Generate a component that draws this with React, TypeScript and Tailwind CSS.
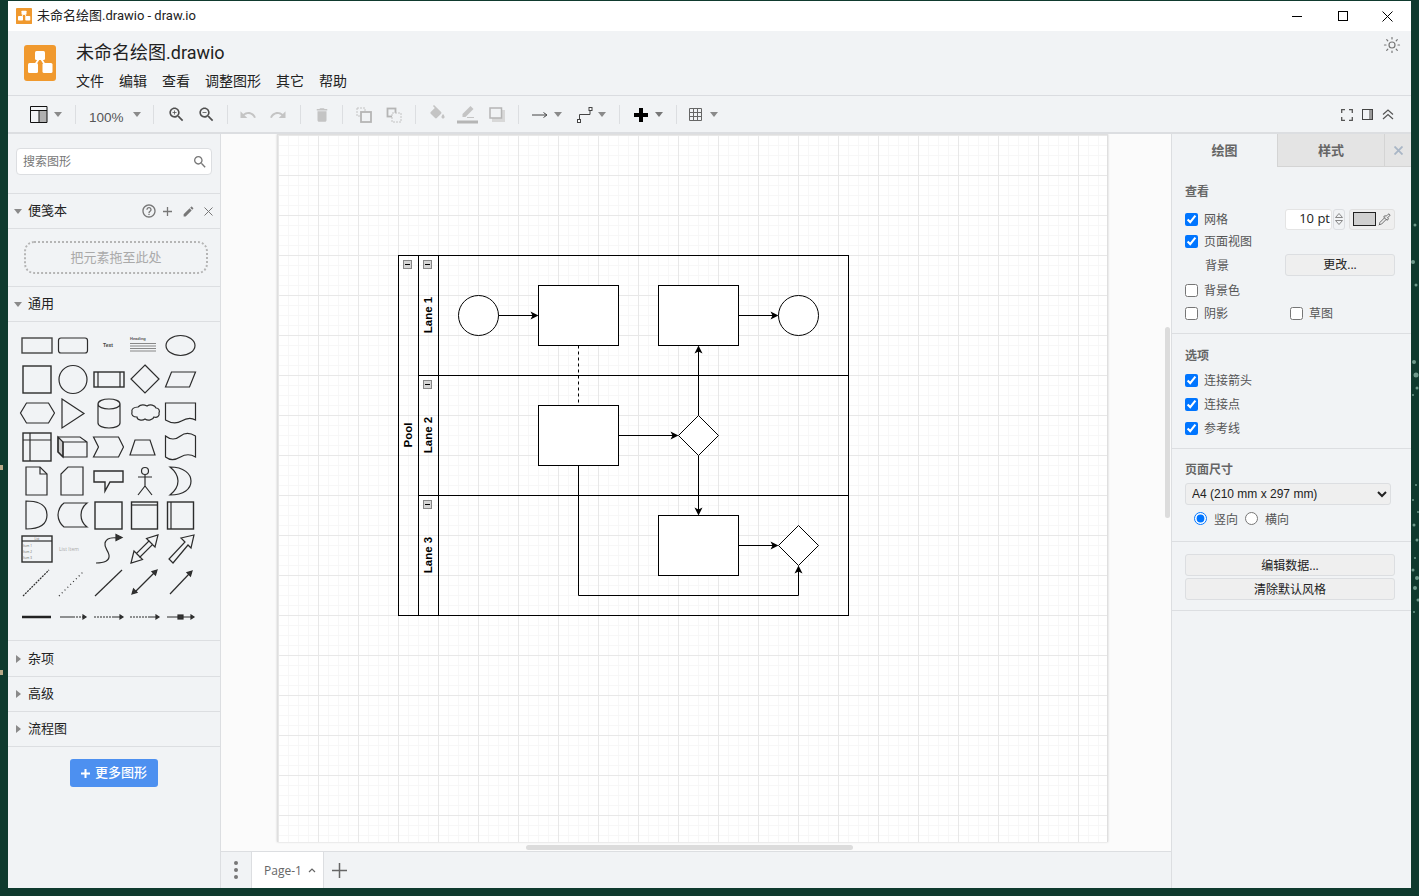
import { Sun, Pipette } from "lucide-react";
import type { ReactNode } from "react";

const FONT = "font-['Open_Sans','Noto_Sans_CJK_SC',sans-serif]";
const ROBOTO = "font-['Roboto','Noto_Sans_CJK_SC',sans-serif]";
const ARIAL = "font-['Liberation_Sans','Noto_Sans_CJK_SC',sans-serif]";

const ZOOM = "M15.5 14h-.79l-.28-.27C15.41 12.59 16 11.11 16 9.5 16 5.91 13.09 3 9.5 3S3 5.91 3 9.5 5.91 16 9.5 16c1.61 0 3.09-.59 4.23-1.57l.27.28v.79l5 4.99L20.49 19l-4.99-5zm-6 0C7.01 14 5 11.99 5 9.5S7.01 5 9.5 5 14 7.01 14 9.5 11.99 14 9.5 14z";
const UNDO = "M12.5 8c-2.65 0-5.05.99-6.9 2.6L2 7v9h9l-3.62-3.62c1.39-1.16 3.16-1.88 5.12-1.88 3.54 0 6.55 2.31 7.6 5.5l2.37-.78C21.08 11.03 17.15 8 12.5 8z";
const REDO = "M18.4 10.6C16.55 8.99 14.15 8 11.5 8c-4.65 0-8.58 3.03-9.96 7.22L3.9 16c1.05-3.19 4.05-5.5 7.6-5.5 1.95 0 3.73.72 5.12 1.88L13 16h9V7l-3.6 3.6z";
const TRASH = "M6 19c0 1.1.9 2 2 2h8c1.1 0 2-.9 2-2V7H6v12zM19 4h-3.5l-1-1h-5l-1 1H5v2h14V4z";
const FILL = "M16.56 8.94L7.62 0 6.21 1.41l2.38 2.38-5.15 5.15c-.59.59-.59 1.54 0 2.12l5.5 5.5c.29.29.68.44 1.06.44s.77-.15 1.06-.44l5.5-5.5c.59-.58.59-1.53 0-2.12zM19 11.5s-2 2.17-2 3.5c0 1.1.9 2 2 2s2-.9 2-2c0-1.33-2-3.5-2-3.5z";
const EDIT = "M3 17.25V21h3.75L17.81 9.94l-3.75-3.75L3 17.25zM20.71 7.04c.39-.39.39-1.02 0-1.41l-2.34-2.34c-.39-.39-1.02-.39-1.41 0l-1.83 1.83 3.75 3.75 1.83-1.83z";
const HELP = "M11 18h2v-2h-2v2zm1-16C6.48 2 2 6.48 2 12s4.48 10 10 10 10-4.48 10-10S17.52 2 12 2zm0 18c-4.41 0-8-3.59-8-8s3.59-8 8-8 8 3.59 8 8-3.59 8-8 8zm0-14c-2.21 0-4 1.79-4 4h2c0-1.1.9-2 2-2s2 .9 2 2c0 2-3 1.75-3 5h2c0-2.25 3-2.5 3-5 0-2.21-1.79-4-4-4z";

function Mat({ d, size = 18, color = "#505050", extra }: { d: string; size?: number; color?: string; extra?: string }) {
  return (
    <svg width={size} height={size} viewBox="0 0 24 24" fill={color} className="shrink-0">
      <path d={d} />
      {extra && <path d={extra} />}
    </svg>
  );
}

function Logo({ width, height, radius }: { width: number; height: number; radius: number }) {
  return (
    <svg width={width} height={height} viewBox="0 0 32 36" preserveAspectRatio="none" className="shrink-0">
      <rect width="32" height="36" rx={radius} fill="#f0992e" />
      <path d="M16 12 L8.5 24 M16 12 L23.5 24" stroke="#fff" strokeWidth="1.8" />
      <rect x="11" y="6" width="10" height="9" rx="1.5" fill="#fff" />
      <rect x="4" y="18" width="10" height="10" rx="1.5" fill="#fff" />
      <rect x="18.500" y="18" width="10" height="10" rx="1.5" fill="#fff" />
    </svg>
  );
}

function Caret({ color = "#8a8a8a" }: { color?: string }) {
  return <div className={"w-0 h-0 border-x-[4.5px] border-x-transparent border-t-[5px]"} style={{ borderTopColor: color }} />;
}

function Divider() {
  return <div className="w-px h-[19px] bg-[#dcdee1] shrink-0" />;
}

function TitleBar() {
  return (
    <div className={`h-[30px] bg-white flex items-center shrink-0 ${ROBOTO}`}>
      <div className="ml-2"><Logo width={16} height={16} radius={1} /></div>
      <span className="ml-[5px] text-[13px] text-[#222] whitespace-nowrap">未命名绘图.drawio - draw.io</span>
      <div className="ml-auto flex items-center h-full">
        <div className="w-[45px] flex justify-center mr-px"><div className="w-[10px] h-px bg-black" /></div>
        <div className="w-[45px] flex justify-center"><div className="w-[10px] h-[10px] border border-black" /></div>
        <div className="w-[45px] flex justify-center mr-[1px]">
          <svg width="11" height="11" viewBox="0 0 11 11"><path d="M.5.5l10 10M10.5.5l-10 10" stroke="#000" /></svg>
        </div>
      </div>
    </div>
  );
}

function MenuHeader() {
  const items = ["文件", "编辑", "查看", "调整图形", "其它", "帮助"];
  return (
    <div className={`h-[65px] bg-[#f1f3f5] border-b border-[#dadce0] flex shrink-0 relative ${ROBOTO}`}>
      <div className="ml-4 mt-[14px]"><Logo width={32} height={36} radius={3} /></div>
      <div className="ml-5 flex flex-col">
        <div className="text-[18px] leading-[24px] mt-[10px] text-[#222] whitespace-nowrap">未命名绘图.drawio</div>
        <div className="flex gap-[15px] mt-[7px] text-[14px] leading-[18px] text-[#222]">
          {items.map((m) => <span key={m}>{m}</span>)}
        </div>
      </div>
      <div className="ml-auto mr-[10px] mt-[5px]"><Sun size={18} color="#777" strokeWidth={1.6} /></div>
    </div>
  );
}

function Toolbar() {
  const off = "#c4c4c4";
  return (
    <div className={`h-[38px] pt-px bg-[#f1f3f5] border-b-2 border-[#dcdee1] flex items-center shrink-0 ${ARIAL}`}>
      <div className="w-[67px] pl-[22px] flex items-center gap-[6px]">
        <svg width="18" height="17" viewBox="0 0 18 17">
          <rect x="9" y="4.5" width="8" height="12" fill="#b0b0b0" />
          <path d="M.5.5h16.5v16H.5zM.5 4.5h16.5M9 4.5v12" fill="none" stroke="#111" />
        </svg>
        <Caret />
      </div>
      <Divider />
      <div className="w-[77px] pl-[13px] flex items-center gap-[9px]">
        <span className="text-[13.5px] text-[#555] mt-[8px]">100%</span>
        <Caret />
      </div>
      <Divider />
      <div className="w-[73px] pl-[13px] flex items-center gap-[11px]">
        <Mat d={ZOOM} size={19} extra="M12 10h-2v2H9v-2H7V9h2V7h1v2h2v1z" />
        <Mat d={ZOOM} size={19} extra="M7 9h5v1H7z" />
      </div>
      <Divider />
      <div className="w-[72px] pl-[11px] flex items-center gap-[12px]">
        <Mat d={UNDO} color={off} />
        <Mat d={REDO} color={off} />
      </div>
      <Divider />
      <div className="w-[41px] pl-[12px] flex items-center">
        <Mat d={TRASH} color={off} />
      </div>
      <Divider />
      <div className="w-[72px] pl-[13px] flex items-center gap-[14px]">
        <svg width="16" height="16" viewBox="0 0 16 16">
          <rect x="1" y="1" width="8" height="8" fill="none" stroke={off} strokeDasharray="2 1" />
          <rect x="5" y="5" width="10" height="10" fill="#f1f3f5" stroke="#b5b5b5" strokeWidth="1.8" />
        </svg>
        <svg width="16" height="16" viewBox="0 0 16 16">
          <rect x="1.5" y="1.500" width="8" height="8" fill="#f1f3f5" stroke="#b5b5b5" strokeWidth="1.8" />
          <rect x="6" y="6" width="9" height="9" fill="#f1f3f5" stroke={off} strokeDasharray="2 1" />
        </svg>
      </div>
      <Divider />
      <div className="w-[102px] pl-[12px] flex items-center gap-[10px]">
        <Mat d={FILL} color={off} size={19} />
        <svg width="21" height="19" viewBox="0 0 21 19">
          <path d="M13.5 1l3 3-8 8H5.5V9z" fill={off} />
          <rect y="15.5" width="21" height="3" fill="#b5b5b5" />
          <rect x="10" y="12" width="7" height="1" fill={off} />
        </svg>
        <svg width="16" height="16" viewBox="0 0 16 16" className="ml-[1px]">
          <rect x="3" y="3" width="13" height="12" fill="#d8d8d8" />
          <rect x="1" y="1" width="11.5" height="10" fill="#f1f3f5" stroke="#b5b5b5" strokeWidth="1.5" />
        </svg>
      </div>
      <Divider />
      <div className="w-[100px] pl-[13px] flex items-center">
        <svg width="16" height="8" viewBox="0 0 16 8"><path d="M0 4h14" stroke="#444" /><path d="M11.5 1.5L15 4l-3.5 2.5" fill="none" stroke="#444" /></svg>
        <div className="ml-[6px]"><Caret /></div>
        <svg width="17" height="16" viewBox="0 0 17 16" className="ml-[15px]">
          <path d="M2.5 13V7.5h10.5V2.5" fill="none" stroke="#444" />
          <rect x=".5" y="12.5" width="3" height="3" fill="#fff" stroke="#444" />
          <rect x="12" y=".5" width="3" height="3" fill="#fff" stroke="#444" />
        </svg>
        <div className="ml-[4px]"><Caret /></div>
      </div>
      <Divider />
      <div className="w-[56px] pl-[14px] flex items-center gap-[7px]">
        <svg width="14" height="14" viewBox="0 0 14 14"><path d="M5 0h4v5h5v4H9v5H5V9H0V5h5z" fill="#000" /></svg>
        <Caret color="#777" />
      </div>
      <Divider />
      <div className="pl-[12px] flex items-center gap-[8px]">
        <svg width="13" height="13" viewBox="0 0 13 13"><path d="M.5.5h12v12H.5zM.5 4.500h12M.5 8.500h12M4.500.5v12M8.500.5v12" fill="none" stroke="#666" /></svg>
        <Caret />
      </div>
      <div className="ml-auto mr-[17px] flex items-center gap-[9px]">
        <svg width="12" height="12" viewBox="0 0 12 12"><path d="M.7 4V.7H4M8 .7h3.3V4M11.3 8v3.3H8M4 11.3H.7V8" fill="none" stroke="#555" strokeWidth="1.3" /></svg>
        <svg width="11" height="11" viewBox="0 0 11 11"><rect x="7" width="4" height="11" fill="#999" /><rect x=".5" y=".5" width="10" height="10" fill="none" stroke="#444" /></svg>
        <svg width="12" height="11" viewBox="0 0 12 11"><path d="M1 5.5L6 1l5 4.5M1 10L6 5.5l5 4.5" fill="none" stroke="#555" strokeWidth="1.2" /></svg>
      </div>
    </div>
  );
}

function SectionHead({ title, open, tall, children }: { title: string; open?: boolean; tall?: boolean; children?: ReactNode }) {
  return (
    <div className={`${tall ? "h-[36px]" : "h-[35px]"} border-b border-[#dcdee1] flex items-center shrink-0`}>
      {open ? (
        <div className="ml-[6px] w-0 h-0 border-x-[4px] border-x-transparent border-t-[5px] border-t-[#8a8a8a]" />
      ) : (
        <div className="ml-[8px] w-0 h-0 border-y-[4px] border-y-transparent border-l-[5px] border-l-[#8a8a8a] mr-[1px]" />
      )}
      <span className="text-[13px] text-[#222] ml-[6px]">{title}</span>
      {children}
    </div>
  );
}

function Palette() {
  const s = { fill: "none", stroke: "#2c2c2c", strokeWidth: 1.2 };
  return (
    <svg width="212" height="318" viewBox="0 322 212 318" className="block">
      <g {...s}>
        <rect x="14" y="338" width="30" height="15" stroke="#444" strokeWidth="1.4" />
        <rect x="50.5" y="338" width="29" height="15" rx="2.5" />
        <ellipse cx="172.5" cy="345.5" rx="14.5" ry="10" />
        <rect x="15" y="366" width="28" height="27" strokeWidth="1.4" />
        <circle cx="65" cy="379.5" r="14" />
        <rect x="86" y="372" width="30" height="15" strokeWidth="1.4" />
        <path d="M90 372v15M112 372v15" />
        <path d="M137 365l14 14-14 14-14-14z" />
        <path d="M163.500 372h24l-6 15h-24z" />
        <path d="M19 403h22l6 10-6 10H19l-6-10z" transform="translate(-.5)" />
        <path d="M54 399l22 14.500-22 14.500z" />
        <path d="M90 404v19c0 3 5 5 11 5s11-2 11-5v-19c0-3-5-5-11-5s-11 2-11 5zM90 404c0 3 5 5 11 5s11-2 11-5" />
        <path d="M130 407c3-3 7-2 9-1 3-2 8-1 9 2 3 0 4 3 3 5 1 3-2 5-5 4-1 3-6 4-9 2-3 2-8 1-8-2-4 0-6-2-5-5-1-3 2-5 6-5z" />
        <path d="M157.500 403h30v17c-5-3-9-2-14 1s-11 2-16-1z" />
        <rect x="15" y="433" width="28" height="28" strokeWidth="1.400" />
        <path d="M15 440h28M22 433v28" />
        <path d="M50 437l5 5v15l-5-5z" fill="#ccc" />
        <path d="M50 437h22l7 5v15H55l-5-5zM55 442h24M55 442v15" />
        <path d="M85.500 437h25l5 10-5 10h-25l5-10z" />
        <path d="M127 440h15l5 15h-25z" />
        <path d="M157.500 436c5 4 10 4 15 0s10-3 15 0v21c-5-3-10-3-15 0s-10 4-15 0z" />
        <path d="M18 467h14l7 7v21H18z" />
        <path d="M32 467v7h7" />
        <path d="M60 467h15v28H53v-21z" />
        <path d="M86 471h29v11h-13l-5 9v-9H86z" strokeWidth="1.4" />
        <circle cx="137" cy="471" r="3.500" />
        <path d="M137 475v11M130 477h14M137 486l-7 9M137 486l7 9" />
        <path d="M162 467c14 0 21 7 21 14 0 8-7 14-21 14 5-4 8-9 8-14s-3-10-8-14z" />
        <path d="M18 501c15 0 21 6 21 14s-6 14-21 14z" />
        <path d="M56 503h23c-4 3-6 8-6 12s2 9 6 12H56c-3-2-6-7-6-12s3-10 6-12z" />
        <rect x="87" y="502" width="27" height="27" strokeWidth="1.400" />
        <rect x="123.500" y="502" width="26" height="27" strokeWidth="1.400" />
        <path d="M123.500 505h26" />
        <rect x="159.500" y="502" width="26" height="27" strokeWidth="1.400" />
        <path d="M163 502v27" />
        <rect x="14" y="536" width="30" height="26" strokeWidth="1.400" />
        <path d="M14 541h30" />
        <path d="M88 563c8 0 14-2 13-8-1-5-5-7-4-12 1-4 6-6 13-5" />
        <path d="M108 534.500l6 3-6 3z" fill="#333" />
        <path d="M123 563l3-12 2.500 2.500L141 541l-2.500-2.500L150 535l-3 12-2.500-2.500L132 557l2.500 2.500z" />
        <path d="M128.500 553.500l4 4M141 541l3.500 3.500" />
        <path d="M165 563l-4-4 16-17-4-4 13-3-3 13-3-3z" />
        <path d="M15 596l26-26" strokeDasharray="2 1" />
        <path d="M51 596l24-24" strokeDasharray="1 3" />
        <path d="M87 596l27-26" />
        <path d="M127 592l20-20" />
        <path d="M124 594l5-1.500-3.500-3.500zM149 570l-5 1.500 3.500 3.500z" fill="#333" />
        <path d="M162 594l19-20" />
        <path d="M184 571l-5 1.500 3.500 3.500z" fill="#333" />
        <path d="M14 617h29" strokeWidth="2.500" stroke="#222" />
        <path d="M52 617h13M104 617h10M140 617h10M159 617h25" />
        <path d="M65 617h12" strokeDasharray="2 1" />
        <path d="M86 617h18" strokeDasharray="2 1" />
        <path d="M122 617h18" strokeDasharray="2 1" />
        <path d="M75 615l3 2-3 2zM112 615l3 2-3 2zM148 615l3 2-3 2zM183 615l3 2-3 2z" fill="#333" />
        <rect x="170" y="615" width="5" height="4" fill="#333" />
      </g>
      <text x="100" y="347" fontSize="5" fontWeight="700" fill="#444" textAnchor="middle" fontFamily="Liberation Sans, sans-serif">Text</text>
      <text x="122" y="340" fontSize="4" fontWeight="700" fill="#555" fontFamily="Liberation Sans, sans-serif">Heading</text>
      <g fill="#888">
        <rect x="122" y="343" width="26" height="1" />
        <rect x="122" y="345.500" width="26" height="1" />
        <rect x="122" y="348" width="26" height="1" />
        <rect x="122" y="350.500" width="26" height="1" />
      </g>
      <text x="29" y="540" fontSize="3" fill="#666" textAnchor="middle">List</text>
      <text x="15" y="547" fontSize="3" fill="#666">Item 1</text>
      <text x="15" y="553" fontSize="3" fill="#666">Item 2</text>
      <text x="15" y="559" fontSize="3" fill="#666">Item 3</text>
      <text x="51" y="551" fontSize="5" fill="#aaa">List Item</text>
    </svg>
  );
}

function Sidebar() {
  return (
    <div className={`w-[213px] h-full bg-[#f1f3f5] border-r border-[#dcdee1] flex flex-col shrink-0 ${FONT}`}>
      <div className="h-[60px] border-b border-[#dcdee1] pt-[14px] px-2 shrink-0">
        <div className="w-[196px] h-[27px] bg-white border border-[#dcdee1] rounded-[4px] flex items-center justify-between pl-[6px] pr-[3px]">
          <span className="text-[12px] text-[#777]">搜索图形</span>
          <Mat d={ZOOM} size={16} color="#777" />
        </div>
      </div>
      <SectionHead title="便笺本" open>
        <div className="ml-auto mr-[7px] flex items-center gap-[6px]">
          <Mat d={HELP} size={16} color="#777" />
          <svg width="9" height="9" viewBox="0 0 9 9"><path d="M4.500 0v9M0 4.500h9" stroke="#777" strokeWidth="1.300" /></svg>
          <div className="ml-[4px]"><Mat d={EDIT} size={13} color="#777" /></div>
          <svg width="9" height="9" viewBox="0 0 9 9" className="ml-[3px]"><path d="M.5.5l8 8M8.500.5l-8 8" stroke="#777" /></svg>
        </div>
      </SectionHead>
      <div className="h-[58px] border-b border-[#dcdee1] flex items-center pl-4 shrink-0">
        <div className="w-[184px] h-[33px] pt-px border-2 border-dotted border-[#b5b5b5] rounded-[10px] flex items-center justify-center text-[13px] text-[#aaa]">
          把元素拖至此处
        </div>
      </div>
      <SectionHead title="通用" open />
      <div className="h-[319px] border-b border-[#dcdee1] shrink-0"><Palette /></div>
      <SectionHead title="杂项" tall />
      <SectionHead title="高级" />
      <SectionHead title="流程图" />
      <div className="flex justify-center mt-[12px]">
        <div className="w-[88px] h-[28px] bg-[#4d90f0] rounded-[3px] text-white text-[13px] font-medium flex items-center justify-center gap-[5px]">
          <svg width="9" height="9" viewBox="0 0 9 9"><path d="M4.500 0v9M0 4.500h9" stroke="#fff" strokeWidth="2" /></svg>
          更多图形
        </div>
      </div>
    </div>
  );
}

function Diagram() {
  const stroke = { fill: "none", stroke: "#000" };
  const boxes = [[538.5, 285.5], [658.5, 285.5], [538.5, 405.5], [658.5, 515.5]];
  const collapse = [[403, 260], [423, 260], [423, 380], [423, 500]];
  const lanes: [string, number, number][] = [["Pool", 408, 435], ["Lane 1", 428, 315], ["Lane 2", 428, 435], ["Lane 3", 428, 555]];
  const heads = ["M538.500 315.500l-8-4 2 4-2 4z", "M778.500 315.500l-8-4 2 4-2 4z", "M678.500 435.500l-8-4 2 4-2 4z", "M778.500 545.500l-8-4 2 4-2 4z", "M698.500 345.500l-4 8 4-2 4 2z", "M698.500 515.500l-4-8 4 2 4-2z", "M798.500 565.500l-4 8 4-2 4 2z"];
  return (
    <svg width="829" height="707" viewBox="278 135 829 707" className="block">
      <defs>
        <pattern id="minor" x="278" y="135" width="10" height="10" patternUnits="userSpaceOnUse">
          <path d="M.5 0v10M0 .5h10" stroke="#f7f7f7" />
        </pattern>
        <pattern id="major" x="278" y="135" width="40" height="40" patternUnits="userSpaceOnUse">
          <path d="M.5 0v40M0 .5h40" stroke="#e8e8e8" />
        </pattern>
      </defs>
      <rect x="278" y="135" width="829" height="707" fill="#fff" />
      <rect x="278" y="135" width="829" height="707" fill="url(#minor)" />
      <rect x="278" y="135" width="829" height="707" fill="url(#major)" />
      <g {...stroke}>
        <rect x="398.500" y="255.500" width="450" height="360" />
        <path d="M418.500 255.500v360M438.500 255.500v360M418.500 375.500h430M418.500 495.500h430" />
        <circle cx="478.500" cy="315.500" r="20" fill="#fff" />
        <circle cx="798.500" cy="315.500" r="20" fill="#fff" />
        {boxes.map(([x, y]) => <rect key={`${x}-${y}`} x={x} y={y} width="80" height="60" fill="#fff" />)}
        <path d="M698.500 415.500l20 20-20 20-20-20z" fill="#fff" />
        <path d="M798.500 525.500l20 20-20 20-20-20z" fill="#fff" />
        <path d="M498.500 315.500h35M738.500 315.500h35M618.500 435.500h55M738.500 545.500h35M698.500 415.500v-65M698.500 455.500v55M578.500 465.500v130h220v-25" />
        <path d="M578.500 345.500v60" strokeDasharray="3 3" />
      </g>
      {heads.map((d) => <path key={d} d={d} fill="#000" />)}
      {collapse.map(([x, y]) => (
        <g key={`${x}-${y}`}>
          <rect x={x + 0.5} y={y + 0.5} width="8" height="8" fill="#d6d6d6" stroke="#888" />
          <path d={`M${x + 2} ${y + 4.5}h5`} stroke="#000" />
        </g>
      ))}
      {lanes.map(([t, x, y]) => (
        <text key={t} x={x} y={y} transform={`rotate(-90 ${x} ${y})`} textAnchor="middle" dominantBaseline="central" fontSize="11.5" fontWeight="700" fontFamily="Liberation Sans, sans-serif" fill="#000">{t}</text>
      ))}
    </svg>
  );
}

function Canvas() {
  return (
    <div className={`flex-1 flex flex-col min-w-0 ${FONT}`}>
      <div className="flex-1 relative bg-[#fbfbfb] overflow-hidden">
        <div className="ml-[56px] w-[831px] border-l border-r border-t border-[#dfdfdf] shadow-[0_0_2px_#ccc]">
          <Diagram />
        </div>
        <div className="absolute left-[305px] top-[711px] w-[327px] h-[5px] rounded bg-[#dcdcdc]" />
        <div className="absolute left-[944px] top-[193px] w-[5px] h-[191px] rounded bg-[#dcdcdc]" />
      </div>
      <div className="h-[37px] bg-[#f1f3f5] border-t border-[#dcdee1] flex items-stretch shrink-0">
        <div className="w-[31px] border-r border-[#dcdee1] flex flex-col items-center justify-center gap-[3px]">
          <div className="w-[4px] h-[4px] rounded-full bg-[#777]" />
          <div className="w-[4px] h-[4px] rounded-full bg-[#777]" />
          <div className="w-[4px] h-[4px] rounded-full bg-[#777]" />
        </div>
        <div className="w-[72px] bg-white border-r border-[#dcdee1] flex items-center pl-[12px] gap-[6px] text-[12px] text-[#666]">
          <span className="mt-px">Page-1</span>
          <svg width="8" height="5" viewBox="0 0 8 5"><path d="M1 4l3-3 3 3" fill="none" stroke="#666" strokeWidth="1.200" /></svg>
        </div>
        <div className="ml-[8px] flex items-center">
          <svg width="15" height="15" viewBox="0 0 15 15"><path d="M7.500 0v15M0 7.500h15" stroke="#666" strokeWidth="1.500" /></svg>
        </div>
      </div>
    </div>
  );
}

function Check({ label, on, className = "" }: { label: string; on?: boolean; className?: string }) {
  return (
    <label className={`flex items-center text-[12px] text-[#555] ${className}`}>
      <input type="checkbox" defaultChecked={on} className="w-[13px] h-[13px] m-0" />
      <span className="ml-[6px] mt-px">{label}</span>
    </label>
  );
}

function PanelButton({ children }: { children: ReactNode }) {
  return <div className="w-[210px] h-[22px] pt-px bg-[#efefef] border border-[#dcdee1] rounded-[3px] flex items-center justify-center text-[12px] text-[#222]">{children}</div>;
}

function RightPanel() {
  return (
    <div className={`w-[240px] h-full bg-[#f1f3f5] border-l border-[#dcdee1] flex flex-col shrink-0 ${FONT}`}>
      <div className="h-[33px] flex shrink-0 text-[13px] font-semibold text-[#666]">
        <div className="w-[105px] pt-px flex items-center justify-center">绘图</div>
        <div className="w-[107px] pt-px bg-[#e4e4e4] border-b border-l border-[#d4d4d4] flex items-center justify-center">样式</div>
        <div className="flex-1 bg-[#e4e4e4] border-b border-l border-[#d4d4d4] flex items-center justify-center">
          <svg width="9" height="9" viewBox="0 0 9 9"><path d="M.5.5l8 8M8.500.5l-8 8" stroke="#a9b6c6" strokeWidth="1.800" /></svg>
        </div>
      </div>
      <div className="h-[167px] border-b border-[#dcdee1] pl-[13px] pt-[16px] shrink-0">
        <div className="text-[12px] font-semibold text-[#666] leading-[18px]">查看</div>
        <div className="flex items-center h-[22px] mt-[7px]">
          <Check label="网格" on className="w-[100px]" />
          <div className="w-[47px] h-[21px] bg-white border border-[#e4e4e4] rounded-[3px] text-[13px] text-[#222] flex items-center justify-end pr-[1px]">10 pt</div>
          <div className="w-[12px] h-[21px] ml-px border border-[#dcdee1] rounded-[3px] flex flex-col items-center justify-center gap-[2px]">
            <svg width="8" height="5" viewBox="0 0 8 5"><path d="M.5 4.500L4 .5l3.500 4z" fill="none" stroke="#888" /></svg>
            <svg width="8" height="5" viewBox="0 0 8 5"><path d="M.5.5L4 4.500 7.500.5z" fill="none" stroke="#888" /></svg>
          </div>
          <div className="w-[46px] h-[21px] ml-[4px] bg-[#efefef] border border-[#e0e0e0] rounded-[3px] flex items-center pl-[3px] gap-[2px]">
            <div className="w-[23px] h-[14px] bg-[#d0d0d0] border border-[#222]" />
            <Pipette size={13} color="#444" strokeWidth={1.400} />
          </div>
        </div>
        <Check label="页面视图" on className="h-[22px]" />
        <div className="flex items-center h-[22px] mt-[2px]">
          <span className="w-[100px] pl-[20px] mt-px text-[12px] text-[#555]">背景</span>
          <div className="w-[110px] h-[22px] bg-[#efefef] border border-[#dcdee1] rounded-[3px] flex items-center justify-center text-[12px] text-[#222]">更改...</div>
        </div>
        <Check label="背景色" className="h-[24px] mt-[2px]" />
        <div className="flex items-center h-[22px]">
          <Check label="阴影" className="w-[105px]" />
          <Check label="草图" />
        </div>
      </div>
      <div className="h-[115px] border-b border-[#dcdee1] pl-[13px] pt-[13px] shrink-0">
        <div className="text-[12px] font-semibold text-[#666] leading-[18px] mb-[3px]">选项</div>
        <Check label="连接箭头" on className="h-[24px]" />
        <Check label="连接点" on className="h-[24px]" />
        <Check label="参考线" on className="h-[24px]" />
      </div>
      <div className="h-[93px] border-b border-[#dcdee1] pl-[13px] pt-[12px] shrink-0">
        <div className="text-[12px] font-semibold text-[#666] leading-[18px]">页面尺寸</div>
        <select className={`w-[206px] h-[22px] mt-[4px] bg-[#efefef] border border-[#dcdee1] rounded-[3px] text-[12px] text-[#222] pl-[2px] ${ARIAL}`} defaultValue="a4">
          <option value="a4">A4 (210 mm x 297 mm)</option>
        </select>
        <div className="flex items-center h-[20px] mt-[4px] ml-[9px] text-[12px] text-[#555]">
          <input type="radio" name="orient" defaultChecked className="w-[13px] h-[13px] m-0 -mt-[2px]" />
          <span className="ml-[7px] w-[31px] mt-[2px]">竖向</span>
          <input type="radio" name="orient" className="w-[13px] h-[13px] m-0 -mt-[2px]" />
          <span className="ml-[7px] mt-[2px]">横向</span>
        </div>
      </div>
      <div className="h-[69px] border-b border-[#dcdee1] pl-[13px] pt-[12px] flex flex-col gap-[2px] shrink-0">
        <PanelButton>编辑数据...</PanelButton>
        <PanelButton>清除默认风格</PanelButton>
      </div>
    </div>
  );
}

function Wallpaper() {
  const spots = [[1415, 225, 1.5], [1413, 262, 2], [1416, 285, 1.5], [1414, 362, 2], [1416, 375, 2.5], [1417, 388, 1.5], [1413, 395, 1], [1416, 485, 1], [1413, 500, 1], [1418, 512, 1], [1414, 525, 1.5], [1417, 540, 1.5], [1415, 558, 1], [1413, 570, 1.5], [1417, 578, 2], [1415, 588, 2], [1418, 600, 1.5], [1414, 612, 1]];
  return (
    <svg width="1419" height="896" viewBox="0 0 1419 896" className="absolute inset-0 pointer-events-none">
      {spots.map(([x, y, r]) => <circle key={`${x}-${y}`} cx={x} cy={y} r={r} fill="#6f9a8c" />)}
      <rect x="0" y="465" width="3" height="5" fill="#b8a888" />
      <rect x="0" y="670" width="3" height="5" fill="#b8a888" />
    </svg>
  );
}

export default function App() {
  return (
    <div className="w-[1419px] h-[896px] bg-[#0f3a2e] pt-px pl-2 overflow-hidden relative">
      <Wallpaper />
      <div className="w-[1403px] h-[887px] flex flex-col bg-[#f1f3f5] relative">
        <TitleBar />
        <MenuHeader />
        <Toolbar />
        <div className="flex-1 flex min-h-0">
          <Sidebar />
          <Canvas />
          <RightPanel />
        </div>
      </div>
    </div>
  );
}
